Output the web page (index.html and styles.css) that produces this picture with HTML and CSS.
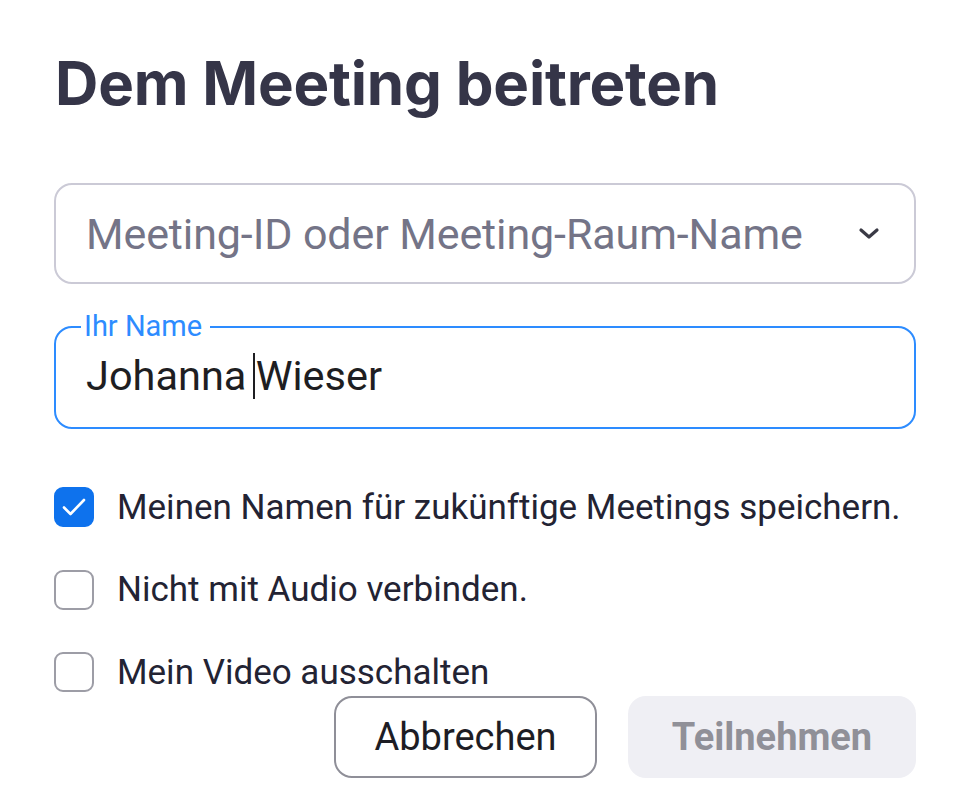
FILE: index.html
```html
<!DOCTYPE html>
<html lang="de">
<head>
<meta charset="utf-8">
<link rel="stylesheet" href="styles.css">
</head>
<body>
<div class="dialog">
  <h1 class="title">Dem Meeting beitreten</h1>
  <div class="select-field">
    <span class="placeholder">Meeting-ID oder Meeting-Raum-Name</span>
    <svg class="chevron" width="22" height="14" viewBox="0 0 22 14"><path d="M3 3 L11 10 L19 3" fill="none" stroke="#3a3a45" stroke-width="3.2" stroke-linecap="round" stroke-linejoin="round"/></svg>
  </div>
  <fieldset class="name-field">
    <legend class="name-label">Ihr Name</legend>
    <div class="name-value"><span>Johanna </span><span class="caret"></span><span>Wieser</span></div>
  </fieldset>
  <div class="options">
    <label class="option">
      <span class="box checked"><svg width="26" height="20" viewBox="0 0 26 20"><path d="M3 10.5 L9.5 17 L23 3" fill="none" stroke="#fff" stroke-width="2.6" stroke-linecap="round" stroke-linejoin="round"/></svg></span>
      <span class="option-text">Meinen Namen für zukünftige Meetings speichern.</span>
    </label>
    <label class="option">
      <span class="box"></span>
      <span class="option-text">Nicht mit Audio verbinden.</span>
    </label>
    <label class="option">
      <span class="box"></span>
      <span class="option-text">Mein Video ausschalten</span>
    </label>
  </div>
  <div class="actions">
    <button class="btn btn-cancel">Abbrechen</button>
    <button class="btn btn-join">Teilnehmen</button>
  </div>
</div>
</body>
</html>
```
FILE: styles.css
```css
html, body {
  margin: 0;
  padding: 0;
  background: #ffffff;
}
body {
  font-family: Roboto, "Liberation Sans", sans-serif;
  width: 967px;
  height: 800px;
  overflow: hidden;
}
.dialog {
  box-sizing: border-box;
  width: 967px;
  padding: 0 51px 0 54px;
  display: flex;
  flex-direction: column;
}
.title {
  margin: 43px 0 0 1px;
  font-family: Inter, "Noto Sans", sans-serif;
  font-weight: 700;
  font-size: 60px;
  line-height: 80px;
  color: #353548;
  letter-spacing: -0.2px;
}
.select-field {
  box-sizing: border-box;
  margin-top: 60px;
  height: 101px;
  border: 2px solid #cbcad6;
  border-radius: 18px;
  display: flex;
  align-items: center;
  justify-content: space-between;
  padding: 0 34px 0 30px;
}
.placeholder {
  font-size: 43px;
  color: #747487;
  letter-spacing: -0.1px;
}
.chevron { display: block; }
.name-field {
  box-sizing: border-box;
  margin: 28px 0 0 0;
  height: 117px;
  border: 2px solid #2d8cff;
  border-radius: 18px;
  padding: 0 30px;
}
.name-label {
  padding: 0 8px 0 3px;
  margin-left: -5px;
  font-size: 29px;
  line-height: 29px;
  color: #2d8cff;
}
.name-value {
  display: flex;
  align-items: center;
  font-size: 41.5px;
  line-height: 52px;
  color: #1e1e22;
  margin-top: 9px;
  white-space: pre;
}
.caret {
  display: inline-block;
  width: 2px;
  height: 46px;
  background: #1e1e22;
  margin: 0 1px 0 -4px;
}
.options {
  margin-top: 58px;
  display: flex;
  flex-direction: column;
  gap: 42.5px;
}
.option {
  display: flex;
  align-items: center;
  gap: 23px;
  height: 40px;
}
.box {
  box-sizing: border-box;
  width: 40px;
  height: 40px;
  border: 2px solid #9d9da6;
  border-radius: 9px;
  display: flex;
  align-items: center;
  justify-content: center;
  flex: none;
}
.box.checked {
  background: #0e72ed;
  border-color: #0e72ed;
}
.box svg { display: block; }
.option-text {
  font-size: 35px;
  color: #232333;
}
.actions {
  margin-top: 4px;
  display: flex;
  justify-content: flex-end;
  gap: 31px;
}
.btn {
  box-sizing: border-box;
  height: 82px;
  border-radius: 18px;
  font-family: Roboto, "Liberation Sans", sans-serif;
  font-size: 38px;
}
.btn-cancel {
  width: 263px;
  background: #fff;
  border: 2px solid #8f8f98;
  color: #1d1d25;
}
.btn-join {
  width: 288px;
  background: #efeff4;
  border: none;
  color: #909098;
  font-weight: 700;
}
```
